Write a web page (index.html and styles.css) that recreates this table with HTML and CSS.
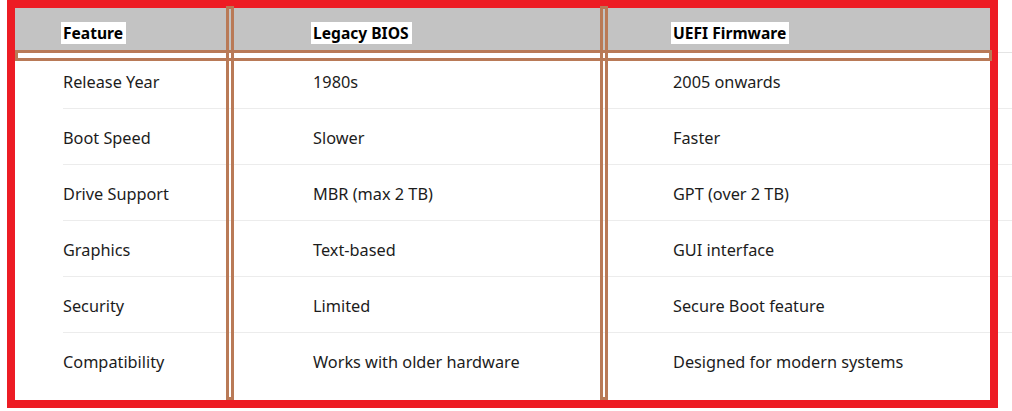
FILE: index.html
```html
<!DOCTYPE html>
<html lang="en">
<head>
<meta charset="utf-8">
<title>BIOS vs UEFI</title>
<link rel="stylesheet" href="styles.css">
</head>
<body>
<div class="page">
  <div class="table">
    <div class="head">
      <div class="hcell"><span class="label">Feature</span></div>
      <div class="hcell"><span class="label">Legacy BIOS</span></div>
      <div class="hcell"><span class="label">UEFI Firmware</span></div>
    </div>
    <div class="row"><div class="cell">Release Year</div><div class="cell">1980s</div><div class="cell">2005 onwards</div></div>
    <div class="row"><div class="cell">Boot Speed</div><div class="cell">Slower</div><div class="cell">Faster</div></div>
    <div class="row"><div class="cell">Drive Support</div><div class="cell">MBR (max 2 TB)</div><div class="cell">GPT (over 2 TB)</div></div>
    <div class="row"><div class="cell">Graphics</div><div class="cell">Text-based</div><div class="cell">GUI interface</div></div>
    <div class="row"><div class="cell">Security</div><div class="cell">Limited</div><div class="cell">Secure Boot feature</div></div>
    <div class="row last"><div class="cell">Compatibility</div><div class="cell">Works with older hardware</div><div class="cell">Designed for modern systems</div></div>
  </div>
  <div class="mark-red"></div>
  <div class="mark-head"></div>
  <div class="mark-col mark-col1"></div>
  <div class="mark-col mark-col2"></div>
</div>
</body>
</html>
```
FILE: styles.css
```css
html, body {
  margin: 0;
  padding: 0;
  background: #ffffff;
}

.page {
  position: relative;
  width: 1012px;
  height: 411px;
  overflow: hidden;
  font-family: "Noto Sans", "Open Sans", sans-serif;
  color: #1c1c1c;
}

.table {
  margin: 8px 0 0 15px;
  width: 1060px;
}

.head {
  display: grid;
  grid-template-columns: 250px 360px 1fr;
  align-items: center;
  height: 44px;
  padding-left: 48px;
  background: linear-gradient(to right, #c3c3c3 975px, transparent 975px);
  border-bottom: 1px solid #e4e4e4;
}

.hcell {
  padding-top: 6px;
}

.label {
  background: #ffffff;
  font-weight: 700;
  font-size: 15.6px;
  line-height: 20px;
  padding: 0 3px 0 2px;
  margin-left: -2px;
  color: #000;
}

.row {
  display: grid;
  grid-template-columns: 250px 360px 1fr;
  align-items: center;
  height: 55px;
  margin-left: 48px;
  border-bottom: 1px solid #ececec;
  font-size: 16.3px;
}

.cell {
  padding-top: 2px;
}

.row.last {
  border-bottom: none;
}

.mark-red {
  position: absolute;
  left: 7px;
  top: 0;
  width: 991px;
  height: 408px;
  box-sizing: border-box;
  border: 8px solid #ed1c24;
}

.mark-head {
  position: absolute;
  left: 15px;
  top: 50px;
  width: 977px;
  height: 11px;
  box-sizing: border-box;
  border: 3px solid #b97a57;
}

.mark-col {
  position: absolute;
  top: 6px;
  width: 8px;
  height: 394px;
  box-sizing: border-box;
  border: 3px solid #b97a57;
}

.mark-col1 { left: 226px; }
.mark-col2 { left: 600px; }
```
